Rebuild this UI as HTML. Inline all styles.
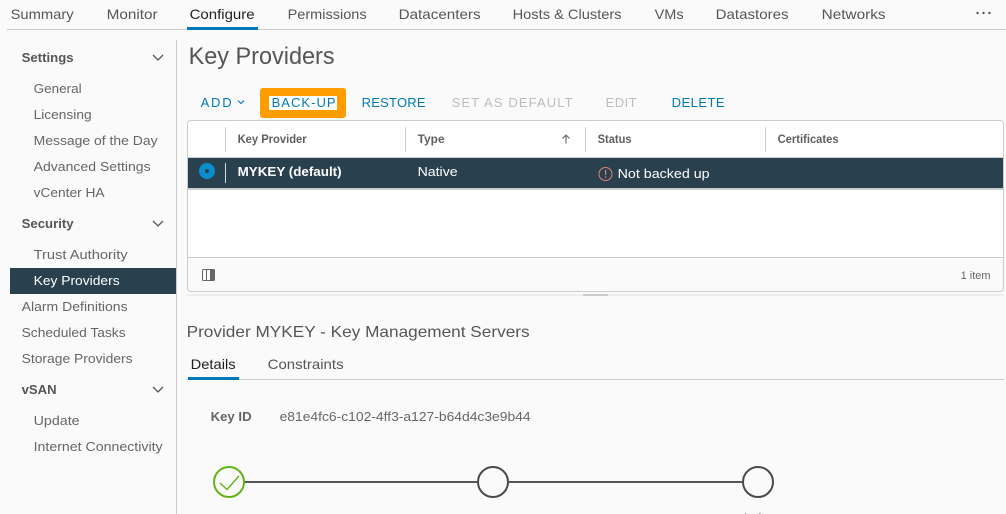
<!DOCTYPE html>
<html><head><meta charset="utf-8"><title>Key Providers</title>
<style>
html,body{margin:0;padding:0;background:#fafafa;overflow:hidden}
svg{display:block;position:absolute;left:0;top:0}
text{font-family:"Liberation Sans",sans-serif;transform:translateX(-.4px)}
.tab{font-size:14px;fill:#565656}
.nav{font-size:13px;fill:#666}
.h{font-size:13px;font-weight:bold;fill:#565656}
.btn{font-size:13px;fill:#0079b8}
.dis{font-size:13px;fill:#bdbdbd}
.th{font-size:11.5px;font-weight:bold;fill:#5f5f5f}
</style></head><body>
<svg width="1006" height="514" viewBox="0 0 1006 514" xmlns="http://www.w3.org/2000/svg">
<rect width="1006" height="514" fill="#fafafa"/>
<!-- top tabs -->
<rect x="7" y="29" width="999" height="1" fill="#cccccc"/>
<rect x="187" y="27" width="71" height="3" fill="#0079b8"/>
<text class="tab" x="11" y="19" textLength="63" lengthAdjust="spacingAndGlyphs">Summary</text>
<text class="tab" x="107" y="19" textLength="51" lengthAdjust="spacingAndGlyphs">Monitor</text>
<text class="tab" x="190" y="19" textLength="65" lengthAdjust="spacingAndGlyphs" style="fill:#1f1f1f">Configure</text>
<text class="tab" x="288" y="19" textLength="79" lengthAdjust="spacingAndGlyphs">Permissions</text>
<text class="tab" x="399" y="19" textLength="82" lengthAdjust="spacingAndGlyphs">Datacenters</text>
<text class="tab" x="513" y="19" textLength="109" lengthAdjust="spacingAndGlyphs">Hosts &amp; Clusters</text>
<text class="tab" x="655" y="19" textLength="29" lengthAdjust="spacingAndGlyphs">VMs</text>
<text class="tab" x="716" y="19" textLength="73" lengthAdjust="spacingAndGlyphs">Datastores</text>
<text class="tab" x="822" y="19" textLength="64" lengthAdjust="spacingAndGlyphs">Networks</text>
<g fill="#565656"><circle cx="977.5" cy="13" r="1.2"/><circle cx="983.5" cy="13" r="1.2"/><circle cx="989.5" cy="13" r="1.2"/></g>
<!-- sidebar -->
<rect x="176" y="40" width="1" height="474" fill="#cccccc"/>
<rect x="10" y="268" width="166" height="26" fill="#29414e"/>
<text class="h" x="22" y="62" textLength="52" lengthAdjust="spacingAndGlyphs">Settings</text>
<text class="nav" x="34" y="93" textLength="48" lengthAdjust="spacingAndGlyphs">General</text>
<text class="nav" x="34" y="119" textLength="58" lengthAdjust="spacingAndGlyphs">Licensing</text>
<text class="nav" x="34" y="145" textLength="124" lengthAdjust="spacingAndGlyphs">Message of the Day</text>
<text class="nav" x="34" y="171" textLength="117" lengthAdjust="spacingAndGlyphs">Advanced Settings</text>
<text class="nav" x="34" y="197" textLength="71" lengthAdjust="spacingAndGlyphs">vCenter HA</text>
<text class="h" x="22" y="228" textLength="52" lengthAdjust="spacingAndGlyphs">Security</text>
<text class="nav" x="34" y="259" textLength="94" lengthAdjust="spacingAndGlyphs">Trust Authority</text>
<text class="nav" x="34" y="285" textLength="86" lengthAdjust="spacingAndGlyphs" style="fill:#fff">Key Providers</text>
<text class="nav" x="22" y="311" textLength="106" lengthAdjust="spacingAndGlyphs">Alarm Definitions</text>
<text class="nav" x="22" y="337" textLength="104" lengthAdjust="spacingAndGlyphs">Scheduled Tasks</text>
<text class="nav" x="22" y="363" textLength="111" lengthAdjust="spacingAndGlyphs">Storage Providers</text>
<text class="h" x="22" y="394" textLength="35" lengthAdjust="spacingAndGlyphs">vSAN</text>
<text class="nav" x="34" y="425" textLength="46" lengthAdjust="spacingAndGlyphs">Update</text>
<text class="nav" x="34" y="451" textLength="129" lengthAdjust="spacingAndGlyphs">Internet Connectivity</text>
<g fill="none" stroke="#565656" stroke-width="1.3">
<path d="M153 55l5 5 5-5"/><path d="M153 221l5 5 5-5"/><path d="M153 387l5 5 5-5"/>
</g>
<!-- heading -->
<text x="189" y="64" font-size="24" fill="#565656" textLength="146" lengthAdjust="spacingAndGlyphs">Key Providers</text>
<!-- toolbar -->
<text class="btn" x="201" y="107" textLength="31" lengthAdjust="spacing">ADD</text>
<path d="M238 100.5l3 3 3-3" fill="none" stroke="#0079b8" stroke-width="1.1"/>
<rect x="260" y="88" width="86" height="30" rx="3" fill="#ff9c00"/>
<rect x="269" y="96" width="68" height="14" fill="#ffffff"/>
<text class="btn" x="272" y="107" textLength="64" lengthAdjust="spacing">BACK-UP</text>
<text class="btn" x="362" y="107" textLength="64" lengthAdjust="spacing">RESTORE</text>
<text class="dis" x="452" y="107" textLength="121" lengthAdjust="spacing">SET AS DEFAULT</text>
<text class="dis" x="606" y="107" textLength="31" lengthAdjust="spacing">EDIT</text>
<text class="btn" x="672" y="107" textLength="53" lengthAdjust="spacing">DELETE</text>
<!-- grid -->
<rect x="187.5" y="120.5" width="816" height="171" rx="3" fill="#ffffff" stroke="#cccccc"/>
<path d="M188 258h815v30a3 3 0 0 1-3 3H191a3 3 0 0 1-3-3z" fill="#fafafa"/>
<rect x="188" y="257" width="815" height="1" fill="#cccccc"/>
<rect x="188" y="157" width="815" height="1" fill="#cccccc"/>
<rect x="188" y="158" width="815" height="30" fill="#29414e"/>
<rect x="188" y="188" width="815" height="2" fill="#cccccc"/>
<g fill="#cccccc">
<rect x="225" y="127" width="1" height="25"/><rect x="405" y="127" width="1" height="25"/><rect x="585" y="127" width="1" height="25"/><rect x="765" y="127" width="1" height="25"/>
</g>
<rect x="225" y="163" width="1" height="20" fill="#d8dde0"/>
<text class="th" x="238" y="143" textLength="69" lengthAdjust="spacingAndGlyphs">Key Provider</text>
<text class="th" x="418" y="143" textLength="27" lengthAdjust="spacingAndGlyphs">Type</text>
<text class="th" x="598" y="143" textLength="34" lengthAdjust="spacingAndGlyphs">Status</text>
<text class="th" x="778" y="143" textLength="61" lengthAdjust="spacingAndGlyphs">Certificates</text>
<path d="M566 143.5v-8.5M562.5 138.5l3.5-3.5 3.5 3.5" fill="none" stroke="#666" stroke-width="1.1"/>
<circle cx="207" cy="171" r="8" fill="#0a8ed0"/>
<circle cx="207" cy="171" r="2" fill="#29414e"/>
<text x="238" y="176" font-size="13" font-weight="bold" fill="#fff" textLength="104" lengthAdjust="spacingAndGlyphs">MYKEY (default)</text>
<text x="418" y="176" font-size="13" fill="#fff" textLength="40" lengthAdjust="spacingAndGlyphs">Native</text>
<circle cx="605.5" cy="174" r="6.5" fill="none" stroke="#e0807a" stroke-width="1"/>
<rect x="605" y="170" width="1.2" height="5" fill="#e0807a"/><rect x="605" y="176.3" width="1.2" height="1.4" fill="#e0807a"/>
<text x="618" y="178" font-size="13" fill="#fff" textLength="92" lengthAdjust="spacingAndGlyphs">Not backed up</text>
<!-- footer -->
<g><rect x="202.5" y="269.5" width="12" height="11" rx="1" fill="none" stroke="#666"/><rect x="206" y="270" width="1" height="10" fill="#666"/><rect x="210" y="270" width="4" height="10" fill="#666"/></g>
<text x="961" y="279" font-size="11" fill="#666" textLength="30" lengthAdjust="spacingAndGlyphs">1 item</text>
<!-- splitter -->
<rect x="187" y="294" width="817" height="2" fill="#eeeeee"/>
<rect x="583" y="294" width="25" height="2" fill="#cccccc"/>
<!-- details -->
<text x="187" y="337" font-size="16" fill="#565656" textLength="343" lengthAdjust="spacingAndGlyphs">Provider MYKEY - Key Management Servers</text>
<rect x="187" y="379" width="817" height="1" fill="#cccccc"/>
<rect x="188" y="377" width="51" height="3" fill="#0079b8"/>
<text x="191" y="369" font-size="14" fill="#1f1f1f" textLength="45" lengthAdjust="spacingAndGlyphs">Details</text>
<text x="268" y="369" font-size="14" fill="#565656" textLength="76" lengthAdjust="spacingAndGlyphs">Constraints</text>
<text x="211" y="421" font-size="13" font-weight="bold" fill="#666" textLength="41" lengthAdjust="spacingAndGlyphs">Key ID</text>
<text x="280" y="421" font-size="13" fill="#666" textLength="251" lengthAdjust="spacingAndGlyphs">e81e4fc6-c102-4ff3-a127-b64d4c3e9b44</text>
<!-- stepper -->
<rect x="244" y="481" width="234" height="2" fill="#565656"/>
<rect x="508" y="481" width="234" height="2" fill="#565656"/>
<circle cx="229" cy="482" r="15" fill="#fafafa" stroke="#60b515" stroke-width="2"/>
<path d="M220 483l7 6.5 12-13.5" fill="none" stroke="#60b515" stroke-width="1.4"/>
<circle cx="493" cy="482" r="15" fill="#fafafa" stroke="#4a4a4a" stroke-width="2"/>
<circle cx="758" cy="482" r="15" fill="#fafafa" stroke="#4a4a4a" stroke-width="2"/>
<text x="742" y="522.5" font-size="13" fill="#565656" textLength="32" lengthAdjust="spacingAndGlyphs">Active</text>
</svg>
</body></html>
